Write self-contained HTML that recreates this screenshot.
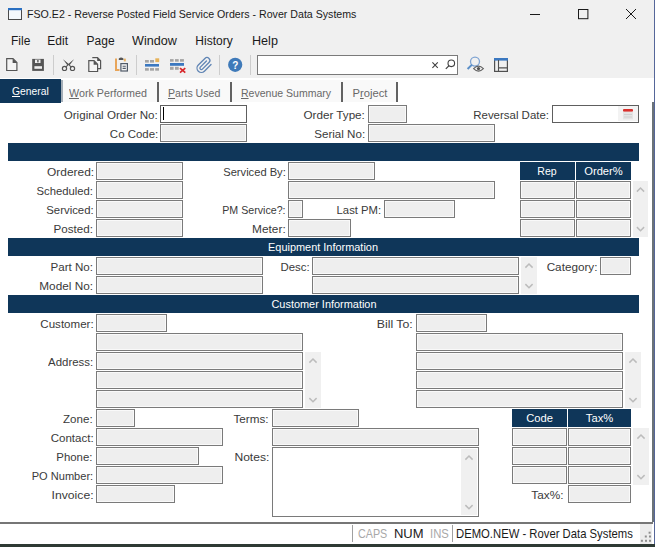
<!DOCTYPE html>
<html><head><meta charset="utf-8"><style>
html,body{margin:0;padding:0;width:655px;height:547px;overflow:hidden;background:#f0f0f0;position:relative;}
body>div,body>svg{position:absolute;}
.t{position:absolute;white-space:pre;line-height:1;font-family:"Liberation Sans",sans-serif;}
</style></head><body>
<div style="left:0px;top:0px;width:655px;height:78px;background:#f0f0f0;"></div>
<svg style="left:7px;top:7px" width="16" height="14"><rect x="1.5" y="1.5" width="13" height="11" fill="#f4f8fc" stroke="#4a4a4a" stroke-width="1"/><rect x="1" y="1" width="14" height="2.2" fill="#2a6fc1"/></svg>
<div class="t" style="left:27px;top:9.34px;font-size:10.7px;color:#1a1a1a;transform:scaleX(0.9940);transform-origin:left;">FSO.E2 - Reverse Posted Field Service Orders - Rover Data Systems</div>
<svg style="left:520px;top:0px" width="130" height="30"><g stroke="#1a1a1a" stroke-width="1" fill="none"><path d="M10,14.5 H20"/><rect x="58.5" y="9.5" width="9.4" height="9.2"/><path d="M106,9 L116,19 M116,9 L106,19"/></g></svg>
<div class="t" style="left:11px;top:34.84px;font-size:12px;color:#1a1a1a;">File</div>
<div class="t" style="left:47.3px;top:34.84px;font-size:12px;color:#1a1a1a;">Edit</div>
<div class="t" style="left:86.6px;top:34.84px;font-size:12px;color:#1a1a1a;">Page</div>
<div class="t" style="left:131.7px;top:34.84px;font-size:12px;color:#1a1a1a;transform:scaleX(1.0500);transform-origin:left;">Window</div>
<div class="t" style="left:195.3px;top:34.84px;font-size:12px;color:#1a1a1a;">History</div>
<div class="t" style="left:251.6px;top:34.84px;font-size:12px;color:#1a1a1a;transform:scaleX(1.0500);transform-origin:left;">Help</div>
<svg style="left:0px;top:52px" width="520" height="26">
<path d="M6.7,6.7 H13 L16.9,10.6 V18.5 H6.7 Z" fill="#f4f4f4" stroke="#555" stroke-width="1.2"/>
<path d="M12.6,6.4 L17.2,11 H12.6 Z" fill="#555"/>
<rect x="32.2" y="6.9" width="11.7" height="12" fill="#555"/>
<rect x="35" y="7.6" width="5.5" height="3.4" fill="#f0f0f0"/>
<rect x="37.2" y="8" width="1.4" height="2.4" fill="#555"/>
<rect x="34.4" y="14.2" width="7.6" height="2.6" fill="#f0f0f0"/>
<rect x="53" y="3" width="1" height="20" fill="#cdcdcd"/>
<g fill="none" stroke="#555" stroke-width="1.2">
 <circle cx="64.5" cy="16.4" r="2.1"/><circle cx="72.5" cy="16.4" r="2.1"/>
</g>
<path d="M63,7.2 L71.6,14.6 L70.6,15.3 Z" fill="#555"/>
<path d="M74,7.2 L65.4,14.6 L66.4,15.3 Z" fill="#555"/>
<path d="M63,7.2 L69,12.5 L67.6,13.6 Z M74,7.2 L68,12.5 L69.4,13.6 Z" fill="#555"/>
<path d="M92.3,5.6 H97.5 L100.6,8.7 V16.6 H98" fill="#f4f4f4" stroke="#555" stroke-width="1.2"/>
<path d="M97.2,5.3 L101,9.1 H97.2 Z" fill="#555"/>
<path d="M88.8,8.6 H94 L97.6,12.2 V19.5 H88.8 Z" fill="#f4f4f4" stroke="#555" stroke-width="1.2"/>
<path d="M93.6,8.3 L98,12.7 H93.6 Z" fill="#555"/>
<path d="M116,6.5 V18 H119.5" fill="none" stroke="#e8a55a" stroke-width="2"/>
<rect x="123.8" y="6.6" width="2" height="2.8" fill="#e8b060"/>
<path d="M118.8,8 V6.6 Q121,4.6 123.4,6.6 V8 Z" fill="#555"/>
<rect x="120.9" y="11.6" width="6.5" height="7.4" fill="#f4f4f4" stroke="#505a68" stroke-width="1.2"/>
<path d="M122.6,14.3 H125.8 M122.6,16.4 H125.8" stroke="#505a68" stroke-width="1.1"/>
<rect x="136" y="3" width="1" height="20" fill="#cdcdcd"/>
<g fill="#a4a4a4">
 <rect x="145" y="8" width="3.8" height="2.6"/><rect x="150" y="8" width="4" height="2.6"/>
 <rect x="145" y="16.1" width="3.8" height="2.6"/><rect x="150" y="16.1" width="4" height="2.6"/><rect x="155.2" y="16.1" width="3.8" height="2.6"/>
</g>
<rect x="155.3" y="6.3" width="3.9" height="3.8" fill="#e6b25a"/>
<rect x="145" y="12" width="14" height="2.6" fill="#3b78c0"/>
<g fill="#a4a4a4">
 <rect x="170" y="7.1" width="3.6" height="2.6"/><rect x="175" y="7.1" width="3.7" height="2.6"/><rect x="180" y="7.1" width="3.9" height="2.6"/>
 <rect x="170" y="14.8" width="3.6" height="3"/><rect x="175" y="14.8" width="3.7" height="3"/>
</g>
<rect x="170" y="11" width="14" height="2.8" fill="#3b78c0"/>
<path d="M180,16.2 L185.3,20.6 M185.3,16.2 L180,20.6" stroke="#d8262a" stroke-width="1.7"/>
<g transform="translate(195.6,4.6) scale(0.72)"><path d="M21.44 11.05l-9.19 9.19a6 6 0 0 1-8.49-8.49l9.19-9.19a4 4 0 0 1 5.66 5.66l-9.2 9.19a2 2 0 0 1-2.83-2.83l8.49-8.48" fill="none" stroke="#5f84b4" stroke-width="1.8" stroke-linecap="round"/></g>
<rect x="219" y="3" width="1" height="20" fill="#cdcdcd"/>
<circle cx="235.2" cy="12.8" r="7.1" fill="#3f7ab9"/>
<text x="235.3" y="16.9" font-family="Liberation Sans" font-weight="bold" font-size="10" fill="#ffffff" text-anchor="middle">?</text>
<rect x="250" y="3" width="1" height="20" fill="#cdcdcd"/>
<rect x="257.5" y="3.5" width="200" height="19" fill="#ffffff" stroke="#7a7a7a" stroke-width="1"/>
<path d="M432.4,10.4 L437.8,15.8 M437.8,10.4 L432.4,15.8" stroke="#404040" stroke-width="1.1"/>
<circle cx="451.3" cy="11.3" r="3.3" fill="none" stroke="#404040" stroke-width="1.1"/>
<path d="M448.8,13.8 L445.8,16.8" stroke="#404040" stroke-width="1.2"/>
<circle cx="475" cy="9.6" r="4.5" fill="none" stroke="#7ea3d2" stroke-width="1.3"/>
<path d="M472,12.6 L467.6,17" stroke="#5b8fc8" stroke-width="2"/>
<path d="M473.6,16.6 Q478.5,11.6 483.4,16.6 Q478.5,21.6 473.6,16.6 Z" fill="#f0f0f0" stroke="#606060" stroke-width="1.1"/>
<circle cx="478.5" cy="16.6" r="1.6" fill="#505050"/>
<rect x="494.6" y="6.6" width="12.8" height="12.8" fill="none" stroke="#505050" stroke-width="1.2"/>
<rect x="494" y="6" width="14" height="2.6" fill="#3b78c0"/>
<path d="M498.5,8 V19 M498.5,15.9 H507" stroke="#505050" stroke-width="1.1"/>
</svg>
<div style="left:0px;top:78px;width:655px;height:26px;background:#ffffff;"></div>
<div style="left:63px;top:80px;width:334px;height:22px;background:#f9f9f9;"></div>
<div style="left:0px;top:79px;width:61px;height:24px;background:#0f3659;"></div>
<div style="left:61px;top:80px;width:2px;height:22px;background:#a4aeb8;"></div>
<div style="left:157px;top:82px;width:2px;height:20px;background:#626262;"></div>
<div style="left:230px;top:82px;width:2px;height:20px;background:#626262;"></div>
<div style="left:341px;top:82px;width:2px;height:20px;background:#626262;"></div>
<div style="left:396px;top:82px;width:2px;height:20px;background:#626262;"></div>
<div class="t" style="left:12px;top:86.02px;font-size:11.2px;color:#ffffff;transform:scaleX(0.9230);transform-origin:left;"><u>G</u>eneral</div>
<div class="t" style="left:69.3px;top:87.72px;font-size:11.2px;color:#686868;transform:scaleX(0.9590);transform-origin:left;"><u>W</u>ork Performed</div>
<div class="t" style="left:168px;top:87.72px;font-size:11.2px;color:#686868;transform:scaleX(0.9450);transform-origin:left;"><u>P</u>arts Used</div>
<div class="t" style="left:241px;top:87.72px;font-size:11.2px;color:#686868;transform:scaleX(0.9400);transform-origin:left;"><u>R</u>evenue Summary</div>
<div class="t" style="left:352.5px;top:87.72px;font-size:11.2px;color:#686868;">P<u>r</u>oject</div>
<div style="left:0px;top:103px;width:652px;height:419px;background:#ffffff;"></div>
<div style="left:652px;top:102px;width:2px;height:420px;background:#6b7378;"></div>
<div style="left:654px;top:0px;width:1px;height:522px;background:#4a5c9a;"></div>
<div class="t" style="right:496.9px;top:109.52px;font-size:11.2px;color:#3a3a3a;transform:scaleX(1.0360);transform-origin:right;">Original Order No:</div>
<div style="left:160px;top:105px;width:87px;height:18px;background:#ffffff;border:1px solid #5e5e5e;box-sizing:border-box;"></div>
<div style="left:163px;top:107px;width:1px;height:13px;background:#000000;"></div>
<div class="t" style="right:289.7px;top:109.52px;font-size:11.2px;color:#3a3a3a;transform:scaleX(1.0439);transform-origin:right;">Order Type:</div>
<div style="left:368px;top:105px;width:39px;height:18px;background:#eeeeee;border:1px solid #7a7a7a;box-sizing:border-box;box-shadow:inset 0 0 0 1px #f9f9f9;"></div>
<div class="t" style="right:105.60000000000002px;top:109.52px;font-size:11.2px;color:#3a3a3a;transform:scaleX(1.0236);transform-origin:right;">Reversal Date:</div>
<div style="left:552px;top:105px;width:87px;height:18px;background:#ffffff;border:1px solid #5e5e5e;box-sizing:border-box;"></div>
<svg style="left:618px;top:106px" width="20" height="15"><rect x="0" y="0" width="20" height="15" fill="#f3f3f3"/><rect x="5" y="3" width="10" height="2.8" rx="1" fill="#d9302c"/><rect x="5" y="5.8" width="10" height="7.5" fill="#e4e4e4"/><path d="M6,8.5 H14 M6,11 H14" stroke="#d0d0d0" stroke-width="1"/></svg>
<div class="t" style="right:496.9px;top:128.52px;font-size:11.2px;color:#3a3a3a;transform:scaleX(1.0239);transform-origin:right;">Co Code:</div>
<div style="left:160px;top:124px;width:87px;height:18px;background:#eeeeee;border:1px solid #7a7a7a;box-sizing:border-box;box-shadow:inset 0 0 0 1px #f9f9f9;"></div>
<div class="t" style="right:289.7px;top:128.52px;font-size:11.2px;color:#3a3a3a;transform:scaleX(1.0362);transform-origin:right;">Serial No:</div>
<div style="left:368px;top:124px;width:127px;height:18px;background:#eeeeee;border:1px solid #7a7a7a;box-sizing:border-box;box-shadow:inset 0 0 0 1px #f9f9f9;"></div>
<div style="left:8px;top:143px;width:631px;height:18px;background:#0f3659;"></div>
<div class="t" style="right:560.7px;top:166.52px;font-size:11.2px;color:#3a3a3a;transform:scaleX(1.0667);transform-origin:right;">Ordered:</div>
<div style="left:96px;top:162px;width:87px;height:18px;background:#eeeeee;border:1px solid #7a7a7a;box-sizing:border-box;box-shadow:inset 0 0 0 1px #f9f9f9;"></div>
<div class="t" style="right:561.8px;top:185.52px;font-size:11.2px;color:#3a3a3a;transform:scaleX(1.0093);transform-origin:right;">Scheduled:</div>
<div style="left:96px;top:181px;width:87px;height:18px;background:#eeeeee;border:1px solid #7a7a7a;box-sizing:border-box;box-shadow:inset 0 0 0 1px #f9f9f9;"></div>
<div class="t" style="right:561.8px;top:204.52px;font-size:11.2px;color:#3a3a3a;transform:scaleX(1.0156);transform-origin:right;">Serviced:</div>
<div style="left:96px;top:200px;width:87px;height:18px;background:#eeeeee;border:1px solid #7a7a7a;box-sizing:border-box;box-shadow:inset 0 0 0 1px #f9f9f9;"></div>
<div class="t" style="right:561.8px;top:223.52px;font-size:11.2px;color:#3a3a3a;transform:scaleX(1.0389);transform-origin:right;">Posted:</div>
<div style="left:96px;top:219px;width:87px;height:18px;background:#eeeeee;border:1px solid #7a7a7a;box-sizing:border-box;box-shadow:inset 0 0 0 1px #f9f9f9;"></div>
<div class="t" style="right:369.5px;top:166.52px;font-size:11.2px;color:#3a3a3a;transform:scaleX(0.9968);transform-origin:right;">Serviced By:</div>
<div style="left:288px;top:162px;width:87px;height:18px;background:#eeeeee;border:1px solid #7a7a7a;box-sizing:border-box;box-shadow:inset 0 0 0 1px #f9f9f9;"></div>
<div style="left:288px;top:181px;width:207px;height:18px;background:#eeeeee;border:1px solid #7a7a7a;box-sizing:border-box;box-shadow:inset 0 0 0 1px #f9f9f9;"></div>
<div class="t" style="right:369.5px;top:204.52px;font-size:11.2px;color:#3a3a3a;transform:scaleX(0.9508);transform-origin:right;">PM Service?:</div>
<div style="left:288px;top:200px;width:15px;height:18px;background:#eeeeee;border:1px solid #7a7a7a;box-sizing:border-box;box-shadow:inset 0 0 0 1px #f9f9f9;"></div>
<div class="t" style="right:273.8px;top:204.52px;font-size:11.2px;color:#3a3a3a;transform:scaleX(1.0095);transform-origin:right;">Last PM:</div>
<div style="left:384px;top:200px;width:71px;height:18px;background:#eeeeee;border:1px solid #7a7a7a;box-sizing:border-box;box-shadow:inset 0 0 0 1px #f9f9f9;"></div>
<div class="t" style="right:369.5px;top:223.52px;font-size:11.2px;color:#3a3a3a;transform:scaleX(1.0600);transform-origin:right;">Meter:</div>
<div style="left:288px;top:219px;width:63px;height:18px;background:#eeeeee;border:1px solid #7a7a7a;box-sizing:border-box;box-shadow:inset 0 0 0 1px #f9f9f9;"></div>
<div style="left:520px;top:162px;width:55px;height:18px;background:#0f3659;"></div>
<div style="left:576px;top:162px;width:55px;height:18px;background:#0f3659;"></div>
<div class="t" style="left:347px;width:400px;text-align:center;top:166.02px;font-size:11.2px;color:#ffffff;transform:scaleX(0.9400);transform-origin:center;">Rep</div>
<div class="t" style="left:403.5px;width:400px;text-align:center;top:166.02px;font-size:11.2px;color:#ffffff;">Order%</div>
<div style="left:520px;top:181px;width:55px;height:18px;background:#eeeeee;border:1px solid #7a7a7a;box-sizing:border-box;box-shadow:inset 0 0 0 1px #f9f9f9;"></div>
<div style="left:576px;top:181px;width:55px;height:18px;background:#eeeeee;border:1px solid #7a7a7a;box-sizing:border-box;box-shadow:inset 0 0 0 1px #f9f9f9;"></div>
<div style="left:520px;top:200px;width:55px;height:18px;background:#eeeeee;border:1px solid #7a7a7a;box-sizing:border-box;box-shadow:inset 0 0 0 1px #f9f9f9;"></div>
<div style="left:576px;top:200px;width:55px;height:18px;background:#eeeeee;border:1px solid #7a7a7a;box-sizing:border-box;box-shadow:inset 0 0 0 1px #f9f9f9;"></div>
<div style="left:520px;top:219px;width:55px;height:18px;background:#eeeeee;border:1px solid #7a7a7a;box-sizing:border-box;box-shadow:inset 0 0 0 1px #f9f9f9;"></div>
<div style="left:576px;top:219px;width:55px;height:18px;background:#eeeeee;border:1px solid #7a7a7a;box-sizing:border-box;box-shadow:inset 0 0 0 1px #f9f9f9;"></div>
<div style="left:633px;top:181px;width:15px;height:56px;background:#f0f0f0;"></div>
<svg style="left:633px;top:181px" width="15" height="56"><g fill="none" stroke="#bcbcbc" stroke-width="1.5"><path d="M3.9,10.6 L7.5,7 L11.1,10.6"/><path d="M3.9,46.1 L7.5,49.7 L11.1,46.1"/></g></svg>
<div style="left:8px;top:238px;width:631px;height:18px;background:#0f3659;"></div>
<div class="t" style="left:122.60000000000002px;width:400px;text-align:center;top:241.52px;font-size:11.2px;color:#ffffff;transform:scaleX(0.9770);transform-origin:center;">Equipment Information</div>
<div class="t" style="right:561.8px;top:261.52px;font-size:11.2px;color:#3a3a3a;transform:scaleX(1.0359);transform-origin:right;">Part No:</div>
<div style="left:96px;top:257px;width:167px;height:18px;background:#eeeeee;border:1px solid #7a7a7a;box-sizing:border-box;box-shadow:inset 0 0 0 1px #f9f9f9;"></div>
<div class="t" style="right:561.8px;top:280.52px;font-size:11.2px;color:#3a3a3a;transform:scaleX(1.0531);transform-origin:right;">Model No:</div>
<div style="left:96px;top:276px;width:167px;height:18px;background:#eeeeee;border:1px solid #7a7a7a;box-sizing:border-box;box-shadow:inset 0 0 0 1px #f9f9f9;"></div>
<div class="t" style="right:345.8px;top:261.52px;font-size:11.2px;color:#3a3a3a;transform:scaleX(1.0185);transform-origin:right;">Desc:</div>
<div style="left:312px;top:257px;width:207px;height:18px;background:#eeeeee;border:1px solid #7a7a7a;box-sizing:border-box;box-shadow:inset 0 0 0 1px #f9f9f9;"></div>
<div style="left:312px;top:276px;width:207px;height:18px;background:#eeeeee;border:1px solid #7a7a7a;box-sizing:border-box;box-shadow:inset 0 0 0 1px #f9f9f9;"></div>
<div style="left:521px;top:257px;width:16px;height:37px;background:#f0f0f0;"></div>
<svg style="left:521px;top:257px" width="16" height="37"><g fill="none" stroke="#bcbcbc" stroke-width="1.5"><path d="M4.4,10.6 L8.0,7 L11.6,10.6"/><path d="M4.4,27.1 L8.0,30.7 L11.6,27.1"/></g></svg>
<div class="t" style="right:57px;top:261.52px;font-size:11.2px;color:#3a3a3a;transform:scaleX(1.0489);transform-origin:right;">Category:</div>
<div style="left:600px;top:257px;width:31px;height:18px;background:#eeeeee;border:1px solid #7a7a7a;box-sizing:border-box;box-shadow:inset 0 0 0 1px #f9f9f9;"></div>
<div style="left:8px;top:295px;width:631px;height:18px;background:#0f3659;"></div>
<div class="t" style="left:123.80000000000001px;width:400px;text-align:center;top:298.52px;font-size:11.2px;color:#ffffff;transform:scaleX(0.9770);transform-origin:center;">Customer Information</div>
<div class="t" style="right:561.8px;top:318.52px;font-size:11.2px;color:#3a3a3a;transform:scaleX(1.0320);transform-origin:right;">Customer:</div>
<div style="left:96px;top:314px;width:71px;height:18px;background:#eeeeee;border:1px solid #7a7a7a;box-sizing:border-box;box-shadow:inset 0 0 0 1px #f9f9f9;"></div>
<div style="left:96px;top:333px;width:207px;height:18px;background:#eeeeee;border:1px solid #7a7a7a;box-sizing:border-box;box-shadow:inset 0 0 0 1px #f9f9f9;"></div>
<div style="left:96px;top:352px;width:207px;height:18px;background:#eeeeee;border:1px solid #7a7a7a;box-sizing:border-box;box-shadow:inset 0 0 0 1px #f9f9f9;"></div>
<div style="left:96px;top:371px;width:207px;height:18px;background:#eeeeee;border:1px solid #7a7a7a;box-sizing:border-box;box-shadow:inset 0 0 0 1px #f9f9f9;"></div>
<div style="left:96px;top:390px;width:207px;height:18px;background:#eeeeee;border:1px solid #7a7a7a;box-sizing:border-box;box-shadow:inset 0 0 0 1px #f9f9f9;"></div>
<div class="t" style="right:561.8px;top:356.52px;font-size:11.2px;color:#3a3a3a;transform:scaleX(1.0209);transform-origin:right;">Address:</div>
<div style="left:305px;top:352px;width:16px;height:56px;background:#f0f0f0;"></div>
<svg style="left:305px;top:352px" width="16" height="56"><g fill="none" stroke="#bcbcbc" stroke-width="1.5"><path d="M4.4,10.6 L8.0,7 L11.6,10.6"/><path d="M4.4,46.1 L8.0,49.7 L11.6,46.1"/></g></svg>
<div class="t" style="right:241.89999999999998px;top:318.52px;font-size:11.2px;color:#3a3a3a;transform:scaleX(1.1000);transform-origin:right;">Bill To:</div>
<div style="left:416px;top:314px;width:71px;height:18px;background:#eeeeee;border:1px solid #7a7a7a;box-sizing:border-box;box-shadow:inset 0 0 0 1px #f9f9f9;"></div>
<div style="left:416px;top:333px;width:207px;height:18px;background:#eeeeee;border:1px solid #7a7a7a;box-sizing:border-box;box-shadow:inset 0 0 0 1px #f9f9f9;"></div>
<div style="left:416px;top:352px;width:207px;height:18px;background:#eeeeee;border:1px solid #7a7a7a;box-sizing:border-box;box-shadow:inset 0 0 0 1px #f9f9f9;"></div>
<div style="left:416px;top:371px;width:207px;height:18px;background:#eeeeee;border:1px solid #7a7a7a;box-sizing:border-box;box-shadow:inset 0 0 0 1px #f9f9f9;"></div>
<div style="left:416px;top:390px;width:207px;height:18px;background:#eeeeee;border:1px solid #7a7a7a;box-sizing:border-box;box-shadow:inset 0 0 0 1px #f9f9f9;"></div>
<div style="left:625px;top:352px;width:16px;height:56px;background:#f0f0f0;"></div>
<svg style="left:625px;top:352px" width="16" height="56"><g fill="none" stroke="#bcbcbc" stroke-width="1.5"><path d="M4.4,10.6 L8.0,7 L11.6,10.6"/><path d="M4.4,46.1 L8.0,49.7 L11.6,46.1"/></g></svg>
<div class="t" style="right:562.7px;top:413.52px;font-size:11.2px;color:#3a3a3a;transform:scaleX(1.0333);transform-origin:right;">Zone:</div>
<div style="left:96px;top:409px;width:39px;height:18px;background:#eeeeee;border:1px solid #7a7a7a;box-sizing:border-box;box-shadow:inset 0 0 0 1px #f9f9f9;"></div>
<div class="t" style="right:561.8px;top:432.52px;font-size:11.2px;color:#3a3a3a;transform:scaleX(1.0325);transform-origin:right;">Contact:</div>
<div style="left:96px;top:428px;width:127px;height:18px;background:#eeeeee;border:1px solid #7a7a7a;box-sizing:border-box;box-shadow:inset 0 0 0 1px #f9f9f9;"></div>
<div class="t" style="right:562.8px;top:451.52px;font-size:11.2px;color:#3a3a3a;transform:scaleX(1.0182);transform-origin:right;">Phone:</div>
<div style="left:96px;top:447px;width:103px;height:18px;background:#eeeeee;border:1px solid #7a7a7a;box-sizing:border-box;box-shadow:inset 0 0 0 1px #f9f9f9;"></div>
<div class="t" style="right:561.8px;top:470.52px;font-size:11.2px;color:#3a3a3a;transform:scaleX(0.9883);transform-origin:right;">PO Number:</div>
<div style="left:96px;top:466px;width:127px;height:18px;background:#eeeeee;border:1px solid #7a7a7a;box-sizing:border-box;box-shadow:inset 0 0 0 1px #f9f9f9;"></div>
<div class="t" style="right:561.8px;top:489.52px;font-size:11.2px;color:#3a3a3a;transform:scaleX(1.0889);transform-origin:right;">Invoice:</div>
<div style="left:96px;top:485px;width:79px;height:18px;background:#eeeeee;border:1px solid #7a7a7a;box-sizing:border-box;box-shadow:inset 0 0 0 1px #f9f9f9;"></div>
<div class="t" style="right:386.8px;top:413.52px;font-size:11.2px;color:#3a3a3a;transform:scaleX(1.0437);transform-origin:right;">Terms:</div>
<div style="left:272px;top:409px;width:87px;height:18px;background:#eeeeee;border:1px solid #7a7a7a;box-sizing:border-box;box-shadow:inset 0 0 0 1px #f9f9f9;"></div>
<div style="left:272px;top:428px;width:207px;height:18px;background:#eeeeee;border:1px solid #7a7a7a;box-sizing:border-box;box-shadow:inset 0 0 0 1px #f9f9f9;"></div>
<div class="t" style="right:385.7px;top:451.52px;font-size:11.2px;color:#3a3a3a;transform:scaleX(1.0800);transform-origin:right;">Notes:</div>
<div style="left:272px;top:447px;width:207px;height:70px;background:#ffffff;border:1px solid #7a7a7a;box-sizing:border-box;"></div>
<div style="left:461px;top:449px;width:16px;height:66px;background:#f0f0f0;"></div>
<svg style="left:461px;top:449px" width="16" height="66"><g fill="none" stroke="#bcbcbc" stroke-width="1.5"><path d="M4.4,10.6 L8.0,7 L11.6,10.6"/><path d="M4.4,56.1 L8.0,59.7 L11.6,56.1"/></g></svg>
<div style="left:512px;top:409px;width:55px;height:18px;background:#0f3659;"></div>
<div style="left:568px;top:409px;width:63px;height:18px;background:#0f3659;"></div>
<div class="t" style="left:339.5px;width:400px;text-align:center;top:413.02px;font-size:11.2px;color:#ffffff;">Code</div>
<div class="t" style="left:399.5px;width:400px;text-align:center;top:413.02px;font-size:11.2px;color:#ffffff;">Tax%</div>
<div style="left:512px;top:428px;width:55px;height:18px;background:#eeeeee;border:1px solid #7a7a7a;box-sizing:border-box;box-shadow:inset 0 0 0 1px #f9f9f9;"></div>
<div style="left:568px;top:428px;width:63px;height:18px;background:#eeeeee;border:1px solid #7a7a7a;box-sizing:border-box;box-shadow:inset 0 0 0 1px #f9f9f9;"></div>
<div style="left:512px;top:447px;width:55px;height:18px;background:#eeeeee;border:1px solid #7a7a7a;box-sizing:border-box;box-shadow:inset 0 0 0 1px #f9f9f9;"></div>
<div style="left:568px;top:447px;width:63px;height:18px;background:#eeeeee;border:1px solid #7a7a7a;box-sizing:border-box;box-shadow:inset 0 0 0 1px #f9f9f9;"></div>
<div style="left:512px;top:466px;width:55px;height:18px;background:#eeeeee;border:1px solid #7a7a7a;box-sizing:border-box;box-shadow:inset 0 0 0 1px #f9f9f9;"></div>
<div style="left:568px;top:466px;width:63px;height:18px;background:#eeeeee;border:1px solid #7a7a7a;box-sizing:border-box;box-shadow:inset 0 0 0 1px #f9f9f9;"></div>
<div style="left:633px;top:428px;width:16px;height:57px;background:#f0f0f0;"></div>
<svg style="left:633px;top:428px" width="16" height="57"><g fill="none" stroke="#bcbcbc" stroke-width="1.5"><path d="M4.4,10.6 L8.0,7 L11.6,10.6"/><path d="M4.4,47.1 L8.0,50.7 L11.6,47.1"/></g></svg>
<div class="t" style="right:91.20000000000005px;top:489.52px;font-size:11.2px;color:#3a3a3a;transform:scaleX(1.0552);transform-origin:right;">Tax%:</div>
<div style="left:568px;top:485px;width:63px;height:18px;background:#eeeeee;border:1px solid #7a7a7a;box-sizing:border-box;box-shadow:inset 0 0 0 1px #f9f9f9;"></div>
<div style="left:0px;top:522px;width:654px;height:22px;background:#ffffff;"></div>
<div style="left:640px;top:524px;width:12px;height:20px;background:#ececec;"></div>
<div style="left:0px;top:522px;width:653px;height:2px;background:#767676;"></div>
<div style="left:352px;top:525px;width:1px;height:17px;background:#a0a0a0;"></div>
<div style="left:452px;top:525px;width:1px;height:17px;background:#a0a0a0;"></div>
<div class="t" style="left:357.5px;top:527.67px;font-size:12.2px;color:#a8a8a8;transform:scaleX(0.8820);transform-origin:left;">CAPS</div>
<div class="t" style="left:394px;top:527.67px;font-size:12.2px;color:#1a1a1a;transform:scaleX(1.0650);transform-origin:left;">NUM</div>
<div class="t" style="left:430px;top:527.67px;font-size:12.2px;color:#a8a8a8;transform:scaleX(0.9260);transform-origin:left;">INS</div>
<div class="t" style="left:456.3px;top:527.67px;font-size:12.2px;color:#1a1a1a;transform:scaleX(0.9260);transform-origin:left;">DEMO.NEW - Rover Data Systems</div>
<svg style="left:640px;top:530px" width="12" height="14"><g fill="#8e8e8e"><rect x="8.6" y="1.7" width="2" height="2"/><rect x="4.8" y="5.5" width="2" height="2"/><rect x="9" y="5.5" width="2" height="2"/><rect x="0.9" y="9.8" width="2" height="2"/><rect x="5" y="9.8" width="2" height="2"/><rect x="9" y="9.8" width="2" height="2"/></g></svg>
<div style="left:654px;top:0px;width:1px;height:547px;background:#556699;"></div>
<div style="left:0px;top:544px;width:655px;height:3px;background:#2e3a34;"></div>
</body></html>
